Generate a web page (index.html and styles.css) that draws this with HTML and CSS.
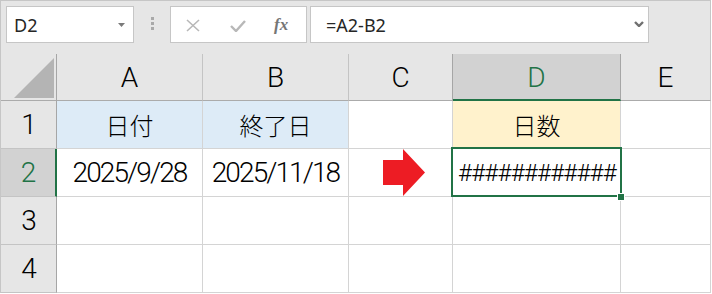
FILE: index.html
```html
<!DOCTYPE html>
<html lang="ja">
<head>
<meta charset="utf-8">
<title>Excel</title>
<link rel="stylesheet" href="styles.css">
</head>
<body>
<div class="window">
  <div class="toolbar">
    <div class="namebox">
      <span>D2</span>
      <svg class="caret" width="7" height="4" viewBox="0 0 7 4"><polygon points="0,0 7,0 3.5,4" fill="#7a7a7a"/></svg>
    </div>
    <div class="grip"><i></i><i></i><i></i></div>
    <div class="fbtns">
      <svg class="ic-x" width="14" height="13" viewBox="0 0 14 13"><path d="M1 1 L13 12 M13 1 L1 12" stroke="#b8b8b8" stroke-width="1.6" fill="none"/></svg>
      <svg class="ic-ok" width="16" height="12" viewBox="0 0 16 12"><path d="M1 6 L6 11 L15 1" stroke="#b8b8b8" stroke-width="2.4" fill="none"/></svg>
      <span class="fx">fx</span>
    </div>
    <div class="fbar">
      <span>=A2-B2</span>
      <svg class="chev" width="10" height="6" viewBox="0 0 10 6"><path d="M1 1 L5 5 L9 1" stroke="#707070" stroke-width="2.4" fill="none"/></svg>
    </div>
  </div>
  <div class="sheet">
    <div class="c corner"><svg width="40" height="40" viewBox="0 0 40 40"><polygon points="40,0 40,40 0,40" fill="#b4b4b4"/></svg></div>
    <div class="c ch">A</div>
    <div class="c ch">B</div>
    <div class="c ch pre">C</div>
    <div class="c ch on">D</div>
    <div class="c ch">E</div>

    <div class="c rh">1</div>
    <div class="c jp blue">日付</div>
    <div class="c jp blue">終了日</div>
    <div class="c"></div>
    <div class="c jp yellow">日数</div>
    <div class="c"></div>

    <div class="c rh on">2</div>
    <div class="c date">2025/9/28</div>
    <div class="c date">2025/11/18</div>
    <div class="c arrow"><svg width="42" height="47" viewBox="0 0 42 47"><polygon points="0,11 20,11 20,0 42,23.5 20,47 20,36 0,36" fill="#ed1c24"/></svg></div>
    <div class="c active"><span class="hash">############</span><div class="selbox"></div><div class="handle"></div></div>
    <div class="c"></div>

    <div class="c rh">3</div>
    <div class="c"></div>
    <div class="c"></div>
    <div class="c"></div>
    <div class="c"></div>
    <div class="c"></div>

    <div class="c rh">4</div>
    <div class="c"></div>
    <div class="c"></div>
    <div class="c"></div>
    <div class="c"></div>
    <div class="c"></div>
  </div>
</div>
</body>
</html>
```
FILE: styles.css
```css
* { box-sizing: border-box; margin: 0; padding: 0; }
body { margin: 0; background: #fff; width: 712px; height: 294px; overflow: hidden; }

.window {
  width: 711px;
  border-left: 1px solid #c6c6c6;
  border-top: 1px solid #c6c6c6;
}

.toolbar {
  height: 53px;
  background: #e6e6e6;
  border-right: 1px solid #c6c6c6;
  display: flex;
  align-items: flex-start;
  padding: 5px 0 0 5px;
}

.namebox {
  width: 128px;
  height: 37px;
  background: #fff;
  border: 1px solid #c6c6c6;
  display: flex;
  align-items: center;
  justify-content: space-between;
  padding: 0 8px 0 7px;
  font: 18px "Noto Sans", sans-serif;
  color: #262626;
}

.grip {
  margin-left: 17px;
  margin-top: 11px;
  display: flex;
  flex-direction: column;
  gap: 2px;
}
.grip i { display: block; width: 3px; height: 3px; background: #a9a9a9; }

.fbtns {
  margin-left: 16px;
  width: 137px;
  height: 37px;
  background: #fff;
  border: 1px solid #c6c6c6;
  display: flex;
  align-items: center;
  padding-left: 15px;
}
.ic-x { margin-top: 2px; }
.ic-ok { margin-left: 30px; margin-top: 3px; }
.fx {
  margin-left: 28px;
  font: italic bold 17px "Liberation Serif", serif;
  color: #767676;
  margin-top: 1px;
}

.fbar {
  margin-left: 3px;
  width: 339px;
  height: 37px;
  background: #fff;
  border: 1px solid #c6c6c6;
  display: flex;
  align-items: center;
  justify-content: space-between;
  padding: 0 4px 0 15px;
  font: 18px "Noto Sans", sans-serif;
  color: #262626;
}
.chev { margin-top: -1px; }

.sheet {
  display: grid;
  grid-template-columns: 56px 146px 146px 104px 168px 90px;
  grid-template-rows: 47px repeat(4, 48px);
}

.c {
  border-right: 1px solid #d4d4d4;
  border-bottom: 1px solid #d4d4d4;
  display: flex;
  align-items: center;
  justify-content: center;
  font-family: Roboto, "Noto Sans CJK JP", sans-serif;
  font-weight: 300;
  font-size: 28px;
  color: #000;
}

.corner {
  background: #e6e6e6;
  border-right-color: #a6a6a6;
  border-bottom-color: #ababab;
  align-items: flex-end;
  justify-content: flex-end;
  padding: 0 2px 2px 0;
}

.ch {
  background: #e6e6e6;
  border-right-color: #c4c4c4;
  border-bottom-color: #ababab;
  padding-top: 1px;
}
.ch.pre { border-right-color: #a6a6a6; }
.ch.on {
  background: #d2d2d2;
  color: #217346;
  border-right-color: #a6a6a6;
  border-bottom: 2px solid #217346;
}

.rh {
  background: #e6e6e6;
  border-right-color: #a6a6a6;
  border-bottom-color: #c4c4c4;
  padding-left: 1px;
}
.rh.on {
  background: #d2d2d2;
  color: #217346;
  border-right: 2px solid #217346;
}

.date { letter-spacing: -1.9px; }

.jp {
  font-family: "Noto Sans CJK JP", sans-serif;
  font-weight: 300;
  font-size: 24px;
}
.blue { background: #ddebf7; }
.yellow { background: #fff2cc; }

.arrow {
  justify-content: flex-start;
  align-items: flex-start;
  padding-left: 34px;
}

.active { position: relative; }
.hash { font-size: 24px; letter-spacing: -0.8px; padding-left: 1px; }
.selbox {
  position: absolute;
  left: -2px;
  top: -2px;
  right: -2px;
  bottom: -1px;
  border: 2px solid #217346;
}
.handle {
  position: absolute;
  left: 164px;
  top: 44px;
  width: 8px;
  height: 8px;
  background: #217346;
  border: 1px solid #fff;
}
```
